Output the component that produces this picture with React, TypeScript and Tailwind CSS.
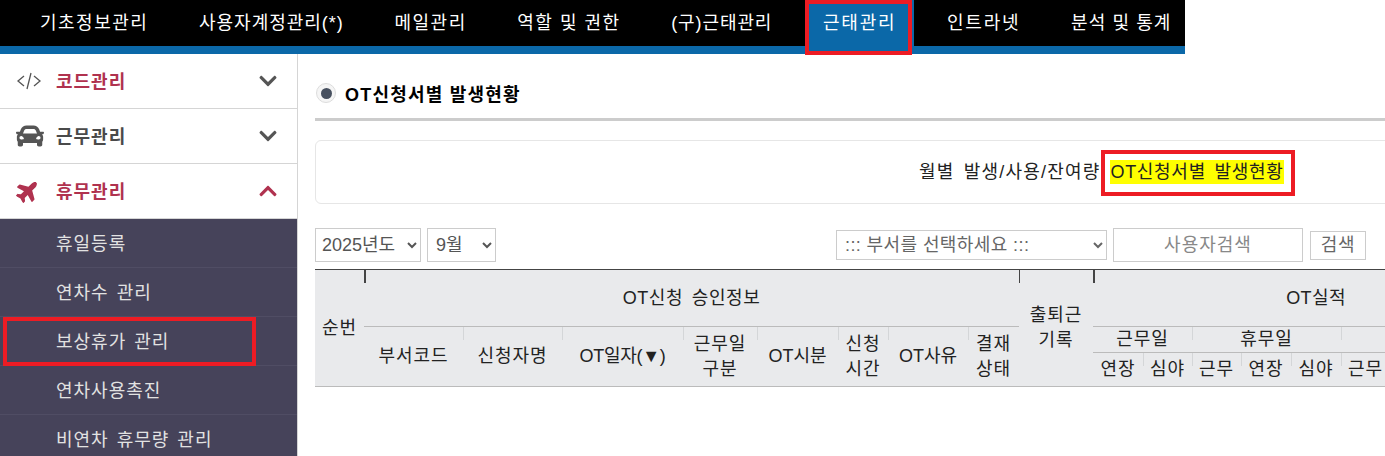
import { FaCar, FaChevronDown, FaChevronUp, FaPlane } from "react-icons/fa";

const navItems = [
    { label: "기초정보관리", track: "tracking-[1.5px]" },
    { label: "사용자계정관리(*)", track: "tracking-[1px]" },
    { label: "메일관리", track: "tracking-[1.5px]" },
    { label: "역할 및 권한", track: "tracking-[1.5px]" },
    { label: "(구)근태관리", track: "tracking-[0.9px]" },
    { label: "근태관리", track: "tracking-[1.8px]" },
    { label: "인트라넷", track: "tracking-[1.8px]" },
    { label: "분석 및 통계", track: "tracking-[1.1px]" },
];
const subItems = ["휴일등록", "연차수 관리", "보상휴가 관리", "연차사용촉진", "비연차 휴무량 관리"];

const Th = ({
    children,
    className = "",
    tick,
    ...rest
}: {
    children?: React.ReactNode;
    className?: string;
    tick?: "dark" | "thick" | "light";
    colSpan?: number;
    rowSpan?: number;
}) => (
    <th {...rest} className={`relative p-0 text-center align-middle font-normal leading-[25px] ${className}`}>
        {tick === "thick" && <span className="absolute left-0 top-0 h-[13px] w-[2px] bg-[#444]" />}
        {tick === "dark" && <span className="absolute left-0 top-0 h-[13px] w-px bg-[#444]" />}
        {tick === "light" && <span className="absolute left-0 top-0 h-[13px] w-px bg-[#d4d6d8]" />}
        {children}
    </th>
);

const SideHead = ({
    icon,
    label,
    open,
    active,
}: {
    icon: React.ReactNode;
    label: string;
    open?: boolean;
    active?: boolean;
}) => (
    <div className="flex h-[55px] items-center border-b border-[#d5d5d5] pl-4 pr-[19px]">
        <span className="flex w-[40px] items-center text-[#555]">{icon}</span>
        <span className={`flex-1 pt-0.5 text-[18px] font-bold tracking-[1px] ${active ? "text-[#b0324f]" : "text-[#4a4a4a]"}`}>{label}</span>
        {open ? <FaChevronUp className="text-[20px] text-[#b0324f]" /> : <FaChevronDown className="text-[20px] text-[#555]" />}
    </div>
);

export default function App() {
    return (
        <div
            className="relative h-[456px] w-[1385px] overflow-hidden bg-white text-[16px] text-[#222]"
            style={{ fontFamily: '"Liberation Sans","Noto Sans CJK KR",sans-serif' }}
        >
            <nav className="flex h-[54px] w-[1185px] gap-[14.6px] border-b-[8px] border-[#0b68a8] bg-black pl-[22px] text-white">
                {navItems.map((item, i) => (
                    <a key={item.label} className={`flex shrink-0 items-center whitespace-nowrap px-[18px] text-[18px] ${item.track} ${i === 5 ? "h-[54px] bg-[#0b68a8] pb-2" : "h-[46px]"}`}>
                        {item.label}
                    </a>
                ))}
            </nav>

            <div className="flex h-[402px]">
                <aside className="w-[298px] shrink-0 border-r border-[#d5d5d5]">
                    <SideHead
                        active
                        label="코드관리"
                        icon={
                            <svg width="26" height="18" viewBox="0 0 26 18" fill="none" stroke="#555" strokeWidth="1.3">
                                <path d="M8 4 2 9l6 5M18 4l6 5-6 5M15 1l-4 16" />
                            </svg>
                        }
                    />
                    <SideHead label="근무관리" icon={<FaCar className="text-[28px]" />} />
                    <SideHead active open label="휴무관리" icon={<FaPlane className="-rotate-45 text-[24px] text-[#b0324f]" />} />
                    <ul className="bg-[#46435a] text-[#e2e2e2]">
                        {subItems.map(item => (
                            <li key={item} className="flex h-[49px] items-center border-b border-[#504d64] pl-[56px] pt-0.5 text-[18px] tracking-[1px] [word-spacing:2px]">
                                {item}
                            </li>
                        ))}
                    </ul>
                </aside>

                <main className="w-[1300px] shrink-0 pl-[17px]">
                    <div className="flex h-[67px] items-center gap-[9px] border-b-[3px] border-[#ccc] pt-[18px]">
                        <span className="-mt-1 ml-px flex h-5 w-5 items-center justify-center rounded-full border border-[#ddd] bg-[#f5f5f5]">
                            <span className="h-[11px] w-[11px] rounded-full bg-[#47505f]" />
                        </span>
                        <h1 className="text-[18px] font-bold tracking-[1.2px] text-black">OT신청서별 발생현황</h1>
                    </div>

                    <div className="mt-[19px] flex h-[64px] items-center rounded-md border border-[#e6e6e6] pl-[603px] text-[18px]">
                        <span className="tracking-[1.2px] [word-spacing:3px]">월별 발생/사용/잔여량</span>
                        <span className="ml-[10px] bg-[#ffff00] leading-[24px] tracking-[0.7px] [word-spacing:3px]">OT신청서별 발생현황</span>
                    </div>

                    <div className="mt-[24px] flex h-[34px] items-center text-[18px] text-[#555]">
                        <select className="h-[34px] w-[106px] border border-[#ccc] bg-white px-0.5">
                            <option>2025년도</option>
                        </select>
                        <select className="ml-[6px] h-[34px] w-[69px] border border-[#ccc] bg-white px-1">
                            <option>9월</option>
                        </select>
                        <select className="ml-[340px] h-[30px] w-[271px] border border-[#ccc] bg-white px-1 tracking-[0.4px] text-[#666]">
                            <option>::: 부서를 선택하세요 :::</option>
                        </select>
                        <input
                            readOnly
                            placeholder="사용자검색"
                            className="ml-[6px] h-[34px] w-[190px] border border-[#ccc] bg-white text-center tracking-[1px] placeholder:text-[#888]"
                        />
                        <button className="ml-[7px] h-[29px] w-[56px] border border-[#ccc] bg-white tracking-[0.8px] text-[#666]">검색</button>
                    </div>

                    <table className="mt-[7px] w-[1224px] table-fixed border-separate border-spacing-0 border-b border-t border-[#444] border-b-[#bbb] bg-[#e9eaec] text-[18px] tracking-[1px]">
                        <colgroup>
                            {[49, 99, 99, 121, 74, 81, 50, 80, 51, 74, 50, 49, 49, 50, 50, 49, 49, 50, 50].map((w, i) => (
                                <col key={i} style={{ width: w }} />
                            ))}
                        </colgroup>
                        <thead>
                            <tr className="h-[56px]">
                                <Th rowSpan={3}>순번</Th>
                                <Th colSpan={8} tick="thick" className="tracking-[0.6px] [word-spacing:3px]">OT신청 승인정보</Th>
                                <Th rowSpan={3} tick="dark">출퇴근<br />기록</Th>
                                <Th colSpan={9} tick="thick" className="tracking-[0.4px]">OT실적</Th>
                            </tr>
                            <tr className="h-[25px]">
                                <Th rowSpan={2} className="border-t border-[#bbb]">부서코드</Th>
                                <Th rowSpan={2} tick="light" className="border-t border-[#bbb]">신청자명</Th>
                                <Th rowSpan={2} tick="light" className="border-t border-[#bbb] tracking-[-0.3px]">OT일자(▼)</Th>
                                <Th rowSpan={2} tick="light" className="border-t border-[#bbb]">근무일<br />구분</Th>
                                <Th rowSpan={2} tick="light" className="border-t border-[#bbb] tracking-normal">OT시분</Th>
                                <Th rowSpan={2} tick="light" className="border-t border-[#bbb]">신청<br />시간</Th>
                                <Th rowSpan={2} tick="light" className="border-t border-[#bbb] tracking-normal">OT사유</Th>
                                <Th rowSpan={2} tick="light" className="border-t border-[#bbb]">결재<br />상태</Th>
                                <Th colSpan={2} className="border-y border-[#bbb]">근무일</Th>
                                <Th colSpan={3} tick="light" className="border-y border-[#bbb]">휴무일</Th>
                                <Th colSpan={4} tick="light" className="border-y border-[#bbb]" />
                            </tr>
                            <tr className="h-[33px]">
                                {["연장", "심야", "근무", "연장", "심야", "근무", "", "", ""].map((t, i) => (
                                    <Th key={i} tick={i ? "light" : undefined}>{t}</Th>
                                ))}
                            </tr>
                        </thead>
                    </table>
                </main>
            </div>

            {/* annotation boxes */}
            <div className="absolute left-[805px] top-0 h-[55px] w-[107px] border-[4px] border-[#ed1c24]" />
            <div className="absolute left-[3px] top-[317px] h-[49px] w-[253px] border-[4px] border-[#ed1c24]" />
            <div className="absolute left-[1101px] top-[150px] h-[46px] w-[194px] border-[4px] border-[#ed1c24]" />
        </div>
    );
}
